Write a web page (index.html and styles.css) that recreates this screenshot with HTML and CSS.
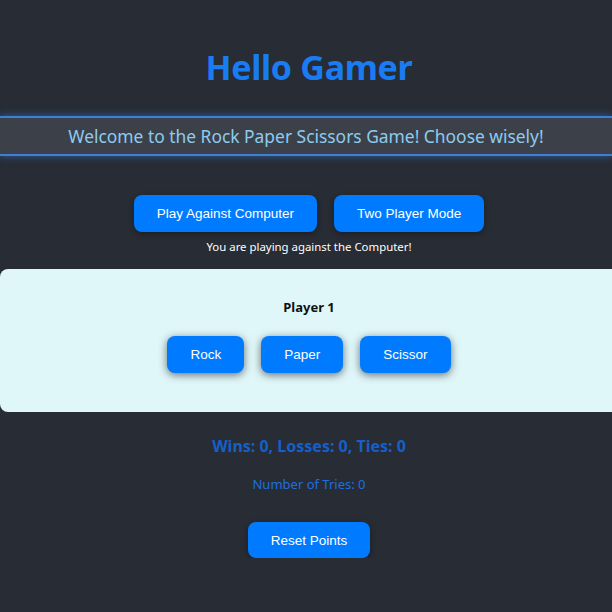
FILE: index.html
```html
<!DOCTYPE html>
<html>
<head>
<meta charset="utf-8">
<link rel="stylesheet" href="styles.css">
</head>
<body>
<div class="app">
  <h1 class="title">Hello Gamer</h1>
  <div class="banner">Welcome to the Rock Paper Scissors Game! Choose wisely!</div>
  <div class="modes">
    <button class="btn mode">Play Against Computer</button>
    <button class="btn mode">Two Player Mode</button>
  </div>
  <p class="status">You are playing against the Computer!</p>
  <div class="panel">
    <h3 class="player">Player 1</h3>
    <div class="choices">
      <button class="btn choice">Rock</button>
      <button class="btn choice">Paper</button>
      <button class="btn choice">Scissor</button>
    </div>
  </div>
  <h2 class="score">Wins: 0, Losses: 0, Ties: 0</h2>
  <p class="tries">Number of Tries: 0</p>
  <button class="btn reset">Reset Points</button>
</div>
</body>
</html>
```
FILE: styles.css
```css
html, body {
  margin: 0;
  padding: 0;
  background: #282c34;
}
body {
  font-family: "Noto Sans", sans-serif;
  overflow: hidden;
}
.app {
  display: flex;
  flex-direction: column;
  align-items: center;
  width: 618px;
}
.title {
  margin: 46px 0 0;
  font-size: 34px;
  font-weight: 700;
  line-height: 42px;
  color: #1a7cf2;
  letter-spacing: -0.3px;
}
.banner {
  margin-top: 28px;
  align-self: flex-start;
  width: 612px;
  box-sizing: border-box;
  height: 40px;
  line-height: 36px;
  text-align: center;
  background: #3c4149;
  border-top: 2px solid #3d7fd6;
  border-bottom: 2px solid #3d7fd6;
  box-shadow: 0 0 8px rgba(50, 130, 230, 0.6);
  color: #8ecbf0;
  font-size: 17.4px;
}
.modes {
  margin-top: 39px;
  display: flex;
  gap: 17px;
}
.btn {
  font-family: "Liberation Sans", Arial, sans-serif;
  background: #007bff;
  color: #fff;
  border: none;
  border-radius: 8px;
  font-size: 13.5px;
  cursor: pointer;
}
.mode {
  height: 37px;
  padding: 0 23px;
  box-shadow: 0 2px 6px rgba(0, 0, 0, 0.35);
}
.status {
  margin: 7px 0 0;
  font-size: 11.4px;
  color: #fff;
  line-height: 16px;
}
.panel {
  margin-top: 14px;
  align-self: flex-start;
  width: 640px;
  height: 143px;
  box-sizing: border-box;
  background: #e0f7fa;
  border-radius: 8px;
  display: flex;
  flex-direction: column;
  align-items: center;
  padding-right: 22px;
}
.player {
  margin: 30px 0 0;
  font-size: 13px;
  font-weight: 700;
  color: #111;
  line-height: 16px;
}
.choices {
  margin-top: 21px;
  display: flex;
  gap: 17px;
}
.choice {
  height: 37px;
  padding: 0 23px;
  box-shadow: 0 2px 8px rgba(0, 0, 0, 0.55);
}
.score {
  margin: 24px 0 0;
  font-size: 16px;
  font-weight: 700;
  color: #1560c8;
  line-height: 20px;
}
.tries {
  margin: 20px 0 0;
  font-size: 13px;
  color: #1f6ee0;
  line-height: 16px;
}
.reset {
  margin-top: 30px;
  height: 36px;
  padding: 0 23px;
  box-shadow: 0 2px 6px rgba(0, 0, 0, 0.35);
}
```
